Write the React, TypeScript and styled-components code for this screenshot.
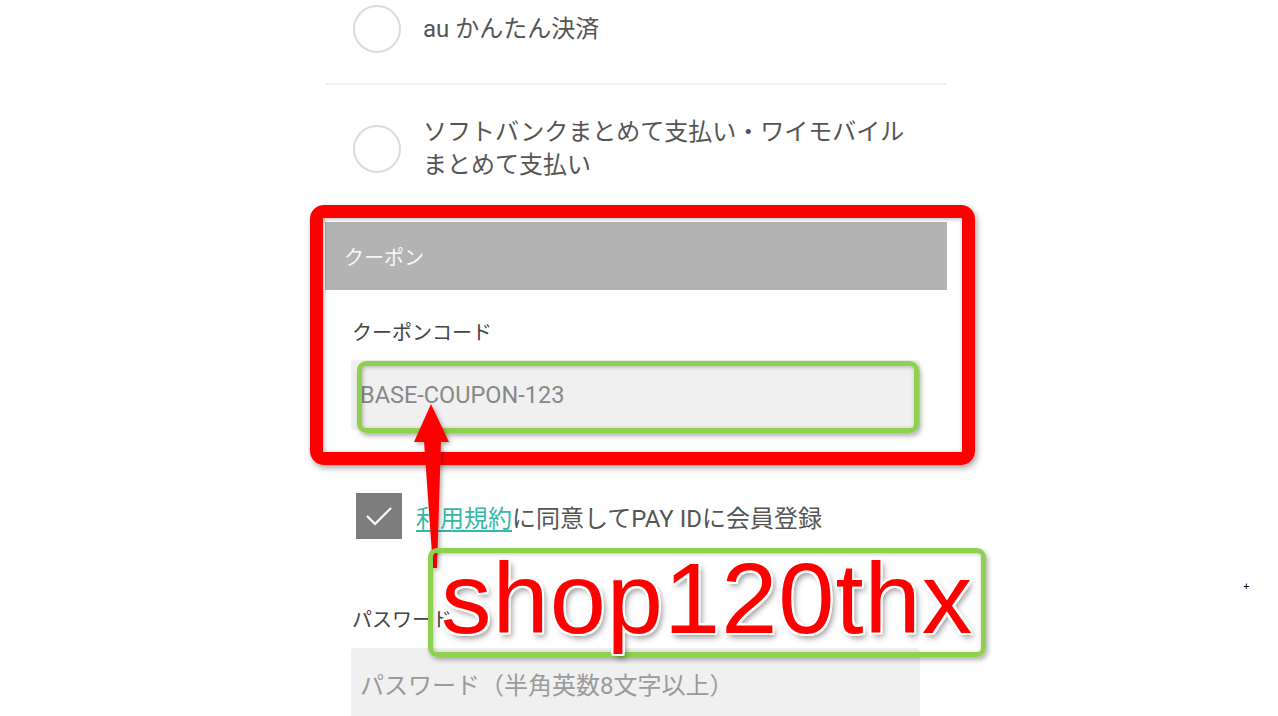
import React from "react";
import styled, { createGlobalStyle } from "styled-components";

const Global = createGlobalStyle`
  html, body { margin: 0; padding: 0; background: #ffffff; }
  body { overflow: hidden; font-family: "Roboto", "Noto Sans CJK JP", sans-serif; }
`;

const Page = styled.div`
  position: relative;
  width: 1278px;
  height: 716px;
  overflow: hidden;
  background: #ffffff;
`;

const Column = styled.div`
  margin-left: 325px;
  width: 622px;
  display: flex;
  flex-direction: column;
`;

const OptionRow = styled.div<{ $pt: number; $pb: number }>`
  display: flex;
  align-items: center;
  gap: 22px;
  padding: ${(p) => p.$pt}px 0 ${(p) => p.$pb}px 28px;
`;

const Radio = styled.span`
  flex: none;
  width: 44px;
  height: 44px;
  border-radius: 50%;
  border: 2px solid #dcdcdc;
  background: #fff;
`;

const OptionText = styled.span`
  font-size: 24px;
  line-height: 33px;
  color: #555;
`;

const Divider = styled.div`
  height: 2px;
  background: #efefef;
`;

const SectionHeader = styled.div`
  height: 68px;
  background: #b3b3b3;
  color: #f7f7f7;
  font-size: 20px;
  display: flex;
  align-items: center;
  padding-left: 19px;
`;

const FieldLabel = styled.div<{ $mt: number }>`
  margin: ${(p) => p.$mt}px 0 0 27px;
  font-size: 20px;
  line-height: 28px;
  color: #444;
`;

const Input = styled.div<{ $mt: number; $size: number; $color: string }>`
  margin: ${(p) => p.$mt}px 27px 0 26px;
  height: 70px;
  background: #f0f0f0;
  border-radius: 4px;
  display: flex;
  align-items: center;
  padding-left: 9px;
  font-size: ${(p) => p.$size}px;
  color: ${(p) => p.$color};
`;

const CheckRow = styled.div`
  margin: 63px 0 0 31px;
  display: flex;
  align-items: center;
  gap: 14px;
`;

const CheckBox = styled.span`
  flex: none;
  width: 46px;
  height: 46px;
  background: #7d7d7d;
  display: flex;
  align-items: center;
  justify-content: center;
`;

const CheckText = styled.span`
  font-size: 24px;
  color: #555;
`;

const Link = styled.span`
  color: #35b8a8;
  text-decoration: underline;
  text-underline-offset: 3px;
`;

/* annotations drawn over the screenshot */
const RedFrame = styled.div`
  position: absolute;
  left: 310px;
  top: 205px;
  width: 665px;
  height: 260px;
  box-sizing: border-box;
  border: 13px solid #ff0000;
  border-radius: 14px;
  box-shadow: 2px 3px 6px rgba(0, 0, 0, 0.35), inset 1px 1px 4px rgba(0, 0, 0, 0.3);
`;

const GreenFrame = styled.div<{ $l: number; $t: number; $w: number; $h: number }>`
  position: absolute;
  left: ${(p) => p.$l}px;
  top: ${(p) => p.$t}px;
  width: ${(p) => p.$w}px;
  height: ${(p) => p.$h}px;
  box-sizing: border-box;
  border: 5px solid #8dd14e;
  border-radius: 9px;
  box-shadow: 2px 3px 5px rgba(0, 0, 0, 0.3), inset 1px 1px 4px rgba(0, 0, 0, 0.25);
`;

const BigCode = styled.div`
  position: absolute;
  left: 441px;
  top: 541px;
  font-family: "Liberation Sans", Arial, sans-serif;
  font-size: 101px;
  line-height: 115px;
  color: #ff0000;
  letter-spacing: 1px;
  text-shadow:
    2px 0 0 #fff, -2px 0 0 #fff, 0 2px 0 #fff, 0 -2px 0 #fff,
    2px 2px 0 #fff, -2px -2px 0 #fff, 2px -2px 0 #fff, -2px 2px 0 #fff,
    3px 4px 6px rgba(0, 0, 0, 0.45);
`;

const ArrowSvg = styled.svg`
  position: absolute;
  left: 0;
  top: 0;
  pointer-events: none;
`;

const Mark = styled.div`
  position: absolute;
  left: 1243px;
  top: 583px;
  font-size: 8px;
  line-height: 8px;
  color: #000;
  font-family: "DejaVu Sans", sans-serif;
  font-weight: bold;
`;

export default function App() {
  return (
    <Page>
      <Global />
      <Column>
        <OptionRow $pt={5} $pb={30}>
          <Radio />
          <OptionText>au かんたん決済</OptionText>
        </OptionRow>
        <Divider />
        <OptionRow $pt={31} $pb={40}>
          <Radio />
          <OptionText>
            ソフトバンクまとめて支払い・ワイモバイル
            <br />
            まとめて支払い
          </OptionText>
        </OptionRow>
        <SectionHeader>クーポン</SectionHeader>
        <FieldLabel $mt={29}>クーポンコード</FieldLabel>
        <Input $mt={13} $size={23.5} $color="#888">BASE-COUPON-123</Input>
        <CheckRow>
          <CheckBox>
            <svg width="30" height="24" viewBox="0 0 30 24">
              <path d="M3 12 L11 20 L27 4" fill="none" stroke="#fff" strokeWidth="2.2" />
            </svg>
          </CheckBox>
          <CheckText>
            <Link>利用規約</Link>に同意してPAY IDに会員登録
          </CheckText>
        </CheckRow>
        <FieldLabel $mt={67}>パスワード</FieldLabel>
        <Input $mt={14} $size={24} $color="#9a9a9a">パスワード（半角英数8文字以上）</Input>
      </Column>

      <RedFrame />
      <GreenFrame $l={357} $t={361} $w={562} $h={72} />
      <ArrowSvg width="1278" height="716">
        <defs>
          <filter id="sh" x="-50%" y="-10%" width="200%" height="130%">
            <feDropShadow dx="2" dy="2" stdDeviation="2" floodColor="#000" floodOpacity="0.3" />
          </filter>
        </defs>
        <g filter="url(#sh)" fill="#ff0000">
          <polygon points="431,404 449,442 414,442" />
          <polygon points="424,441 441,441 437,568 433,568" />
        </g>
      </ArrowSvg>
      <GreenFrame $l={428} $t={548} $w={558} $h={109} />
      <BigCode>shop120thx</BigCode>
      <Mark>+</Mark>
    </Page>
  );
}
